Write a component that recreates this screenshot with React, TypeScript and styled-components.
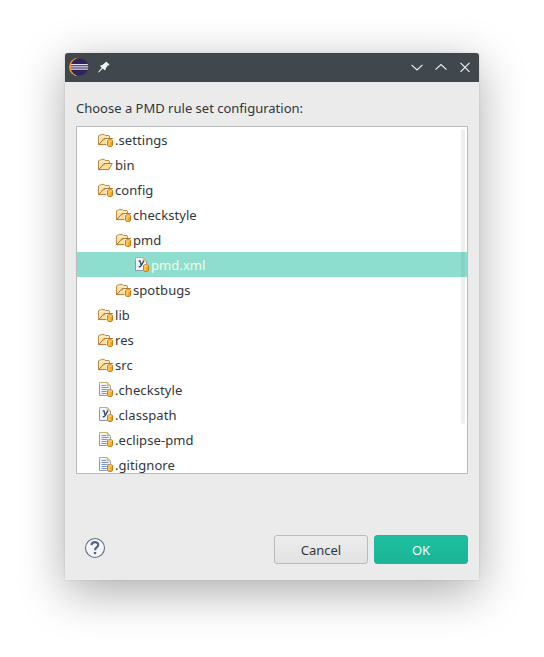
import React from "react";
import styled, { createGlobalStyle } from "styled-components";

const GlobalStyle = createGlobalStyle`
  * { box-sizing: border-box; }
  body {
    margin: 0;
    background: #fff;
    overflow: hidden;
    font-family: "Noto Sans", sans-serif;
    font-size: 13px;
    color: #31363b;
  }
  svg { display: block; flex: none; }
`;

const Desktop = styled.main`
  height: 657px;
  padding: 53px 65px 77px;
`;

const Dialog = styled.section`
  width: 414px;
  height: 527px;
  display: flex;
  flex-direction: column;
  background: #ebebeb;
  border-radius: 3px 3px 0 0;
  box-shadow: 0 12px 48px rgba(0, 0, 0, 0.33), 0 0 2px rgba(0, 0, 0, 0.16);
`;

const TitleBar = styled.header`
  height: 29px;
  flex: none;
  display: flex;
  align-items: center;
  padding: 0 6px 1px 3px;
  background: #40484e;
  border-radius: 3px 3px 0 0;
`;

const PinButton = styled.span`
  margin-left: 7px;
`;

const WindowControls = styled.div`
  margin-left: auto;
  display: flex;
  gap: 8px;
`;

const Content = styled.div`
  flex: 1;
  display: flex;
  flex-direction: column;
  padding: 16px 11px;
`;

const Prompt = styled.label`
  height: 20px;
  line-height: 20px;
  margin-bottom: 8px;
  white-space: nowrap;
`;

const TreeFrame = styled.div`
  position: relative;
  width: 392px;
  height: 348px;
  flex: none;
  overflow: hidden;
  background: #fff;
  border: 1px solid #b9babb;
`;

const Row = styled.div<{ $level: number; $selected?: boolean }>`
  height: 25px;
  display: flex;
  align-items: flex-start;
  gap: 2px;
  padding-left: ${(p) => 20 + p.$level * 18}px;
  line-height: 27px;
  letter-spacing: 0.07px;
  white-space: nowrap;
  background: ${(p) => (p.$selected ? "#8ddecf" : "transparent")};
  color: ${(p) => (p.$selected ? "#f6f9e4" : "inherit")};

  svg { margin-top: 5px; }
`;

const ScrollThumb = styled.div`
  position: absolute;
  top: 2px;
  right: 2px;
  width: 4px;
  height: 295px;
  border-radius: 2px;
  background: rgba(60, 80, 80, 0.085);
`;

const Footer = styled.footer`
  margin-top: 61px;
  display: flex;
  align-items: flex-start;
  gap: 6px;
`;

const HelpButton = styled.span`
  margin: 2px auto 0 8px;
`;

const Button = styled.button<{ $primary?: boolean }>`
  width: 94px;
  height: 29px;
  padding: 1px 0 0;
  font: inherit;
  line-height: 20px;
  border-radius: 3px;
  border: 1px solid ${(p) => (p.$primary ? "#1bb999" : "#b9babb")};
  color: ${(p) => (p.$primary ? "#eefcf8" : "#31363b")};
  background: ${(p) =>
    p.$primary
      ? "linear-gradient(#1dc0a0, #1bb496)"
      : "linear-gradient(#ededed, #e2e2e2)"};
`;

const Repository = () => (
  <g>
    <path d="M10.5 8.5l1-.7h3l1 .7v5l-1 .9h-3l-1-.9z" fill="#f6a623" stroke="#cb7c10" />
    <path d="M11.3 9h3.4" stroke="#ffe9a8" />
    <path d="M12 10v3.6" stroke="#ffe08c" />
  </g>
);

const FolderIcon = ({ shared }: { shared: boolean }) => (
  <svg width="16" height="16" viewBox="0 0 16 16" fill="none">
    <path
      d="M1.5 12.5v-8.5l1-1h1l.8-.6h3l.9 1.1h3.8l.5.6v2.4H7L1.8 13z"
      fill="#f8e2ae"
      stroke="#bd8a4a"
    />
    <path d="M2.5 4.5h5.2M7.5 5h4" stroke="#fff1c8" />
    <path
      d="M1.8 12.6 5.6 8.3 8.6 6.5h6.7l-3.6 6.1z"
      fill="#fbdf9d"
      stroke="#b37631"
    />
    {shared && (
      <>
        <path d="M9.3 7H16v7.5H9.3z" fill="#fff" opacity="0.85" />
        <path d="M8.8 6.5h6.9" stroke="#b37631" />
        <Repository />
      </>
    )}
  </svg>
);

const PageIcon = ({ xml }: { xml: boolean }) => (
  <svg width="16" height="16" viewBox="0 0 16 16" fill="none">
    <path d="M2.5.5h7.7l3.3 3.3v9.7h-11z" fill="#f3f6fc" />
    <path d="M2.5 4V.5h7.7l3.3 3.3v1" stroke="#bfb07c" />
    <path d="M10 .8v3.2h3.2z" fill="#e0c887" stroke="#c6ae6c" strokeWidth=".6" />
    <path d="M2.5 3.5v10h8M13.5 4.5v3" stroke="#8796b6" />
    {xml ? (
      <path
        d="M5.6 3.9H7l1 4M10.8 3.8 8.4 8.2Q7.5 10 5.7 9.8"
        stroke="#29486f"
        strokeWidth="1.4"
      />
    ) : (
      <path
        d="M4.5 3.5H9M4.5 5.5h7M4.5 7.5h7M4.5 9.5H10M4.5 11.5H10"
        stroke="#7893c4"
      />
    )}
    <path d="M9.5 7.5h6v6h-6z" fill="#fff" opacity=".6" />
    <Repository />
  </svg>
);

const EclipseLogo = () => (
  <svg width="22" height="20" viewBox="0 0 22 20" fill="none">
    <circle cx="10.2" cy="9.9" r="9.2" fill="#f39322" />
    <circle cx="12" cy="9.9" r="9.2" fill="#40484e" />
    <circle cx="11.5" cy="9.9" r="8.7" fill="#30245d" />
    <path d="M3 7.7h16.9M2.6 9.9h17.6M3 12.1h16.9" stroke="#e0deec" strokeWidth="1.2" />
  </svg>
);

const PinIcon = () => (
  <svg width="14" height="14" viewBox="0 0 14 14">
    <path
      d="M9 1.4 12.3 4.2 12.2 5.2 10.8 5.6 8.8 8.3 8.7 9.8 7.8 10.2 5.7 8.6 2.3 12.1 1 12.7 1.5 11.4 4.7 7.7 3.3 6.3 3.5 5.4 5.3 5.1 8.1 2.8z"
      fill="#f5f6f6"
    />
  </svg>
);

const ControlIcon = ({ d }: { d: string }) => (
  <svg width="16" height="16" viewBox="0 0 16 16" fill="none" stroke="#f1f2f2" strokeWidth="1.15">
    <path d={d} />
  </svg>
);

const HelpIcon = () => (
  <svg width="22" height="22" viewBox="0 0 22 22" fill="none">
    <circle cx="11" cy="11" r="9.5" fill="#f6f6f7" stroke="#5f7190" strokeWidth="1.15" />
    <path
      d="M7.5 8.1C7.7 4.2 14.5 4.2 14.2 8.1 14 10.5 11 10.3 11 13.2"
      stroke="#516789"
      strokeWidth="2.2"
    />
    <path d="M9.8 15h2.4v2.2H9.8z" fill="#516789" />
  </svg>
);

type Kind = "folder" | "sharedFolder" | "text" | "xml";
type Item = { name: string; kind: Kind; level: number; selected?: boolean };

const items: Item[] = [
  { name: ".settings", kind: "sharedFolder", level: 0 },
  { name: "bin", kind: "folder", level: 0 },
  { name: "config", kind: "sharedFolder", level: 0 },
  { name: "checkstyle", kind: "sharedFolder", level: 1 },
  { name: "pmd", kind: "sharedFolder", level: 1 },
  { name: "pmd.xml", kind: "xml", level: 2, selected: true },
  { name: "spotbugs", kind: "sharedFolder", level: 1 },
  { name: "lib", kind: "sharedFolder", level: 0 },
  { name: "res", kind: "sharedFolder", level: 0 },
  { name: "src", kind: "sharedFolder", level: 0 },
  { name: ".checkstyle", kind: "text", level: 0 },
  { name: ".classpath", kind: "xml", level: 0 },
  { name: ".eclipse-pmd", kind: "text", level: 0 },
  { name: ".gitignore", kind: "text", level: 0 },
];

const ItemIcon = ({ kind }: { kind: Kind }) =>
  kind === "folder" || kind === "sharedFolder" ? (
    <FolderIcon shared={kind === "sharedFolder"} />
  ) : (
    <PageIcon xml={kind === "xml"} />
  );

export default function App() {
  return (
    <Desktop>
      <GlobalStyle />
      <Dialog>
        <TitleBar>
          <EclipseLogo />
          <PinButton>
            <PinIcon />
          </PinButton>
          <WindowControls>
            <ControlIcon d="M2.5 5.8 8 11l5.5-5.2" />
            <ControlIcon d="M2.5 10.7 8 5.5l5.5 5.2" />
            <ControlIcon d="m3.5 3.9 9 9m0-9-9 9" />
          </WindowControls>
        </TitleBar>
        <Content>
          <Prompt>Choose a PMD rule set configuration:</Prompt>
          <TreeFrame>
            {items.map((item) => (
              <Row key={item.name} $level={item.level} $selected={item.selected}>
                <ItemIcon kind={item.kind} />
                <span>{item.name}</span>
              </Row>
            ))}
            <ScrollThumb />
          </TreeFrame>
          <Footer>
            <HelpButton>
              <HelpIcon />
            </HelpButton>
            <Button>Cancel</Button>
            <Button $primary>OK</Button>
          </Footer>
        </Content>
      </Dialog>
    </Desktop>
  );
}
